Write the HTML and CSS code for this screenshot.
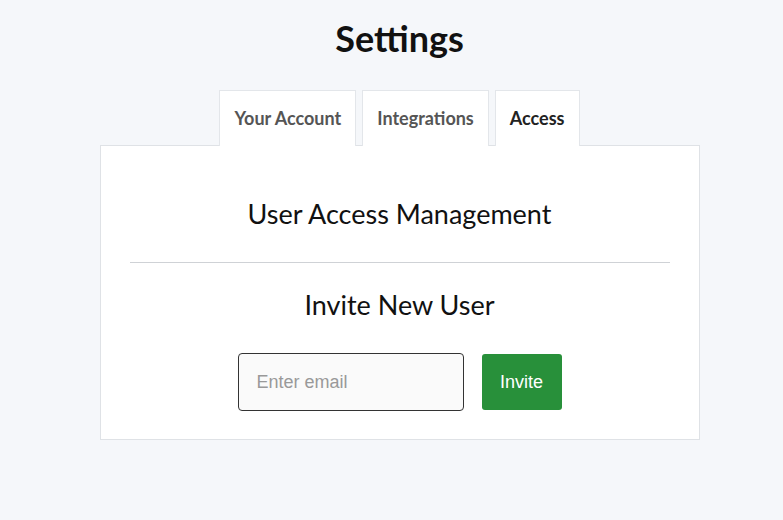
FILE: index.html
```html
<!DOCTYPE html>
<html>
<head>
<meta charset="utf-8">
<link rel="stylesheet" href="styles.css">
</head>
<body>
<div class="page">
  <h1 class="title">Settings</h1>
  <div class="tabs">
    <div class="tab">Your Account</div>
    <div class="tab">Integrations</div>
    <div class="tab active">Access</div>
  </div>
  <div class="panel">
    <h2 class="heading">User Access Management</h2>
    <hr class="divider">
    <h3 class="heading sub">Invite New User</h3>
    <form class="invite">
      <input class="email" type="text" placeholder="Enter email">
      <button class="btn" type="button">Invite</button>
    </form>
  </div>
</div>
</body>
</html>
```
FILE: styles.css
```css
html, body {
  margin: 0;
  background: #f5f7fa;
  font-family: Lato, "Open Sans", sans-serif;
}
.page {
  width: 600px;
  margin: 0 auto;
  padding-left: 16px;
  padding-top: 18px;
}
.title {
  margin: 0;
  text-align: center;
  font-size: 36px;
  font-weight: 700;
  color: #111;
  line-height: 40px;
}
.tabs {
  display: flex;
  justify-content: center;
  gap: 6px;
  margin-top: 32px;
}
.tab {
  box-sizing: border-box;
  height: 56px;
  padding: 0 14px 1px;
  display: flex;
  align-items: center;
  background: #fff;
  border: 1px solid #e3e6ea;
  border-bottom: none;
  font-size: 18px;
  font-weight: 700;
  color: #555;
  margin-bottom: -1px;
}
.tab.active {
  color: #222;
  position: relative;
  z-index: 1;
}
.panel {
  box-sizing: border-box;
  background: #fff;
  border: 1px solid #dfe2e6;
  padding: 52px 29px 27px;
  height: 295px;
}
.heading {
  margin: 0;
  text-align: center;
  font-size: 27px;
  font-weight: 400;
  color: #111;
  line-height: 32px;
}
.divider {
  border: none;
  border-top: 1px solid #cfd2d6;
  margin: 32px 0 26px;
}
.invite {
  display: flex;
  justify-content: center;
  align-items: center;
  gap: 18px;
  margin-top: 32px;
}
.email {
  box-sizing: border-box;
  width: 226px;
  height: 58px;
  border: 1px solid #333;
  border-radius: 4px;
  background: #fafafa;
  padding: 0 18px;
  font-family: "Liberation Sans", Arial, sans-serif;
  font-size: 18px;
  color: #333;
  outline: none;
}
.email::placeholder {
  color: #999;
}
.btn {
  box-sizing: border-box;
  width: 80px;
  height: 56px;
  border: none;
  border-radius: 3px;
  background: #28903a;
  color: #fff;
  font-family: "Liberation Sans", Arial, sans-serif;
  font-size: 18px;
  padding: 0;
}
```
